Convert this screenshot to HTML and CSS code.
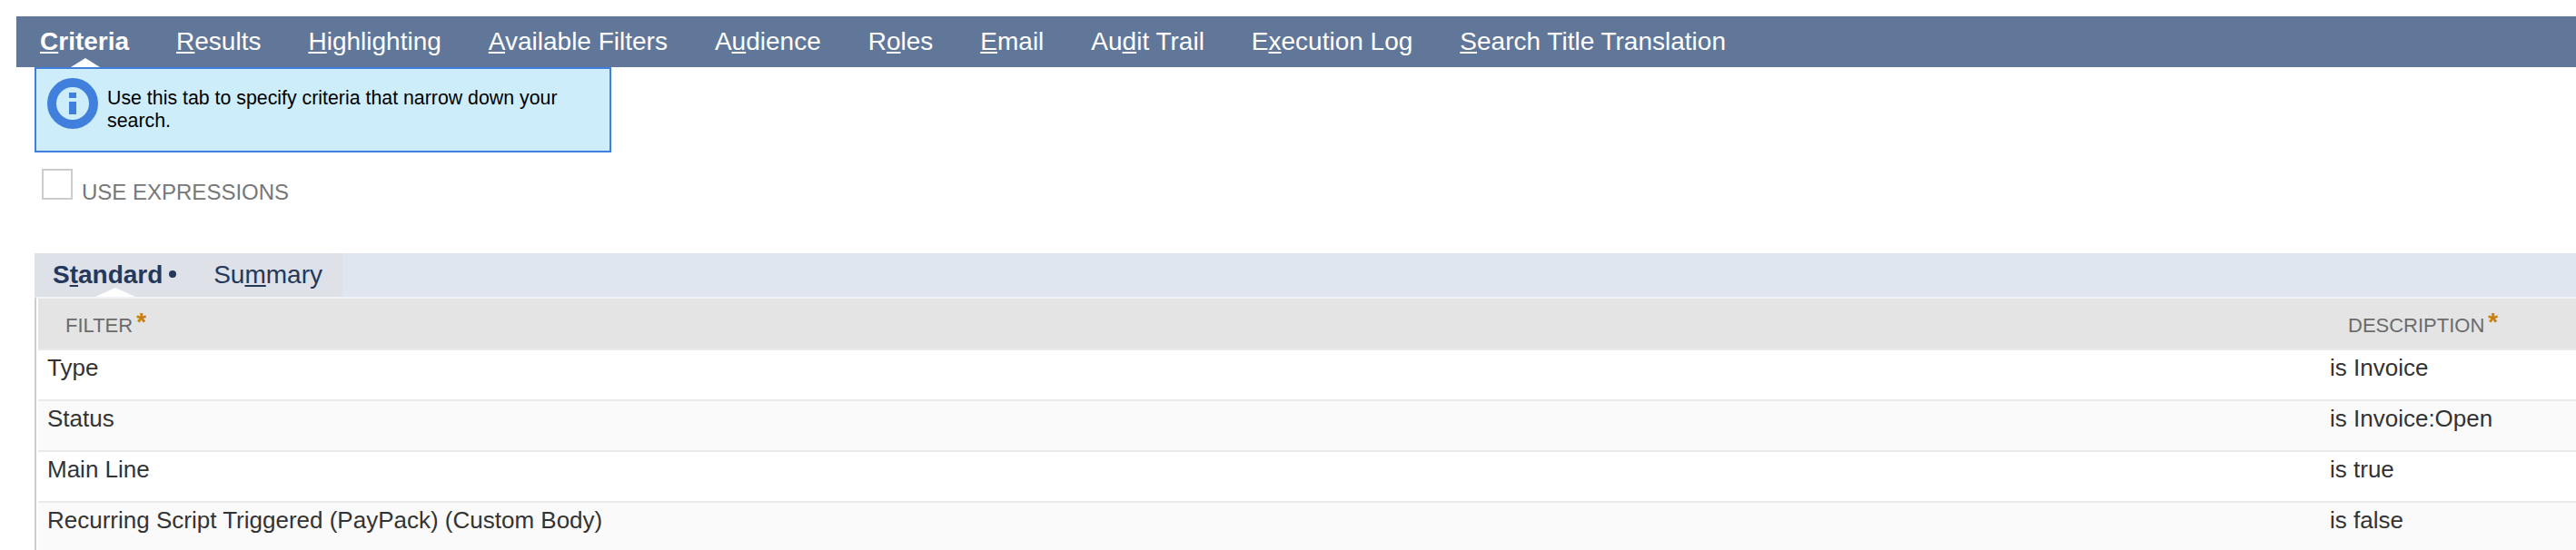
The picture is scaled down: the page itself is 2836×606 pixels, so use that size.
FILE: index.html
```html
<!DOCTYPE html>
<html lang="en">
<head>
  <meta charset="UTF-8">
  <title>Saved Search</title>
  <link rel="stylesheet" href="styles.css">
</head>
<body>

  <nav class="tabs">
    <a class="tab active"><u>C</u>riteria</a>
    <a class="tab"><u>R</u>esults</a>
    <a class="tab"><u>H</u>ighlighting</a>
    <a class="tab"><u>A</u>vailable Filters</a>
    <a class="tab">A<u>u</u>dience</a>
    <a class="tab">R<u>o</u>les</a>
    <a class="tab"><u>E</u>mail</a>
    <a class="tab">Au<u>d</u>it Trail</a>
    <a class="tab">E<u>x</u>ecution Log</a>
    <a class="tab"><u>S</u>earch Title Translation</a>
  </nav>

  <div class="content">
    <div class="info">
      <svg class="info-icon" width="56" height="56" viewBox="0 0 56 56">
        <circle cx="28" cy="28" r="23" fill="none" stroke="#407fdc" stroke-width="10"/>
        <rect x="24" y="16" width="8" height="6" fill="#407fdc"/>
        <rect x="24" y="26" width="8" height="14" fill="#407fdc"/>
      </svg>
      <p>Use this tab to specify criteria that narrow down your search.</p>
    </div>

    <label class="check">
      <input type="checkbox">
      <span>USE EXPRESSIONS</span>
    </label>

    <nav class="subtabs">
      <div class="subtabs-inner">
        <a class="subtab active">S<u>t</u>andard<span class="dot"></span></a>
        <a class="subtab">Su<u>m</u>mary</a>
      </div>
    </nav>

    <div class="machine">
      <div class="row head">
        <div>FILTER<span class="required">*</span></div>
        <div>DESCRIPTION<span class="required">*</span></div>
      </div>
      <div class="row"><div>Type</div><div>is Invoice</div></div>
      <div class="row"><div>Status</div><div>is Invoice:Open</div></div>
      <div class="row"><div>Main Line</div><div>is true</div></div>
      <div class="row"><div>Recurring Script Triggered (PayPack) (Custom Body)</div><div>is false</div></div>
    </div>
  </div>

</body>
</html>
```
FILE: styles.css
```css
* {
  box-sizing: border-box;
}
body {
  margin: 0;
  padding: 18px 0 0 18px;
  height: 606px;
  overflow: hidden;
  background: #fff;
  font-family: "Liberation Sans", Arial, sans-serif;
  color: #333;
}
u {
  text-decoration: underline;
  text-decoration-thickness: 2px;
  text-underline-offset: 2px;
  text-decoration-skip-ink: none;
}

/* top tabs */
.tabs {
  display: flex;
  gap: 52px;
  height: 56px;
  padding-left: 26px;
  background: #607799;
  color: #fff;
  font-size: 28px;
  line-height: 55px;
}
.tab, .subtab {
  position: relative;
  white-space: nowrap;
}
.active {
  font-weight: bold;
}
.tab.active::after {
  content: "";
  position: absolute;
  left: 34px;
  bottom: 0;
  width: 32px;
  height: 10px;
  background: #fff;
  clip-path: polygon(50% 0, 100% 100%, 0 100%);
}

.content {
  padding-left: 20px;
}

/* help box */
.info {
  display: flex;
  width: 635px;
  height: 94px;
  padding: 10px 12px;
  border: 2px solid #407fdc;
  background: #cdedfa;
  color: #000;
  font-size: 21.33px;
  line-height: 25px;
}
.info-icon {
  flex: none;
}
.info p {
  margin: 10px 0 0 10px;
}

.check {
  display: flex;
  gap: 10px;
  height: 111px;
  padding: 18px 0 0 8px;
  color: #777;
  font-size: 24px;
}
.check input {
  appearance: none;
  width: 34px;
  height: 34px;
  margin: 0;
  border: 2px solid #ccc;
  background: #fff;
}
.check span {
  padding-top: 12px;
}

/* second level tabs */
.subtabs {
  height: 48px;
  background: #dfe6ef;
  color: #24385b;
  font-size: 28px;
  line-height: 47px;
}
.subtabs-inner {
  display: flex;
  justify-content: space-between;
  width: 339px;
  height: 48px;
  padding: 0 22px 0 20px;
  background: #dee1e8;
}
.dot {
  display: inline-block;
  width: 8px;
  height: 8px;
  margin-left: 7px;
  border-radius: 50%;
  background: #24385b;
  vertical-align: 6px;
}
.subtab.active::after {
  content: "";
  position: absolute;
  left: 47px;
  bottom: 0;
  width: 44px;
  height: 10px;
  background: #fff;
  clip-path: polygon(50% 0, 100% 100%, 0 100%);
}

/* filter list */
.machine {
  padding-left: 2px;
  border-left: 2px solid #ccc;
  border-top: 2px solid #f0f3f7;
}
.row {
  display: grid;
  grid-template-columns: 2513px 1fr;
  height: 56px;
  padding: 1px 0 0 10px;
  border-bottom: 2px solid #eaeaea;
  font-size: 26px;
  line-height: 36px;
}
.row:nth-child(odd) {
  background: #fafafa;
}
/* the head is the first row, so even data rows stay white */
.row:nth-child(even) {
  background: #fff;
}
.row.head {
  height: 57px;
  padding: 12px 0 0 30px;
  background: #e4e4e4;
  color: #6b6b6b;
  font-size: 22px;
}
.required {
  margin-left: 4px;
  color: #c77f0a;
  font-size: 28px;
  font-weight: bold;
  line-height: 1;
  vertical-align: 2px;
}
```
